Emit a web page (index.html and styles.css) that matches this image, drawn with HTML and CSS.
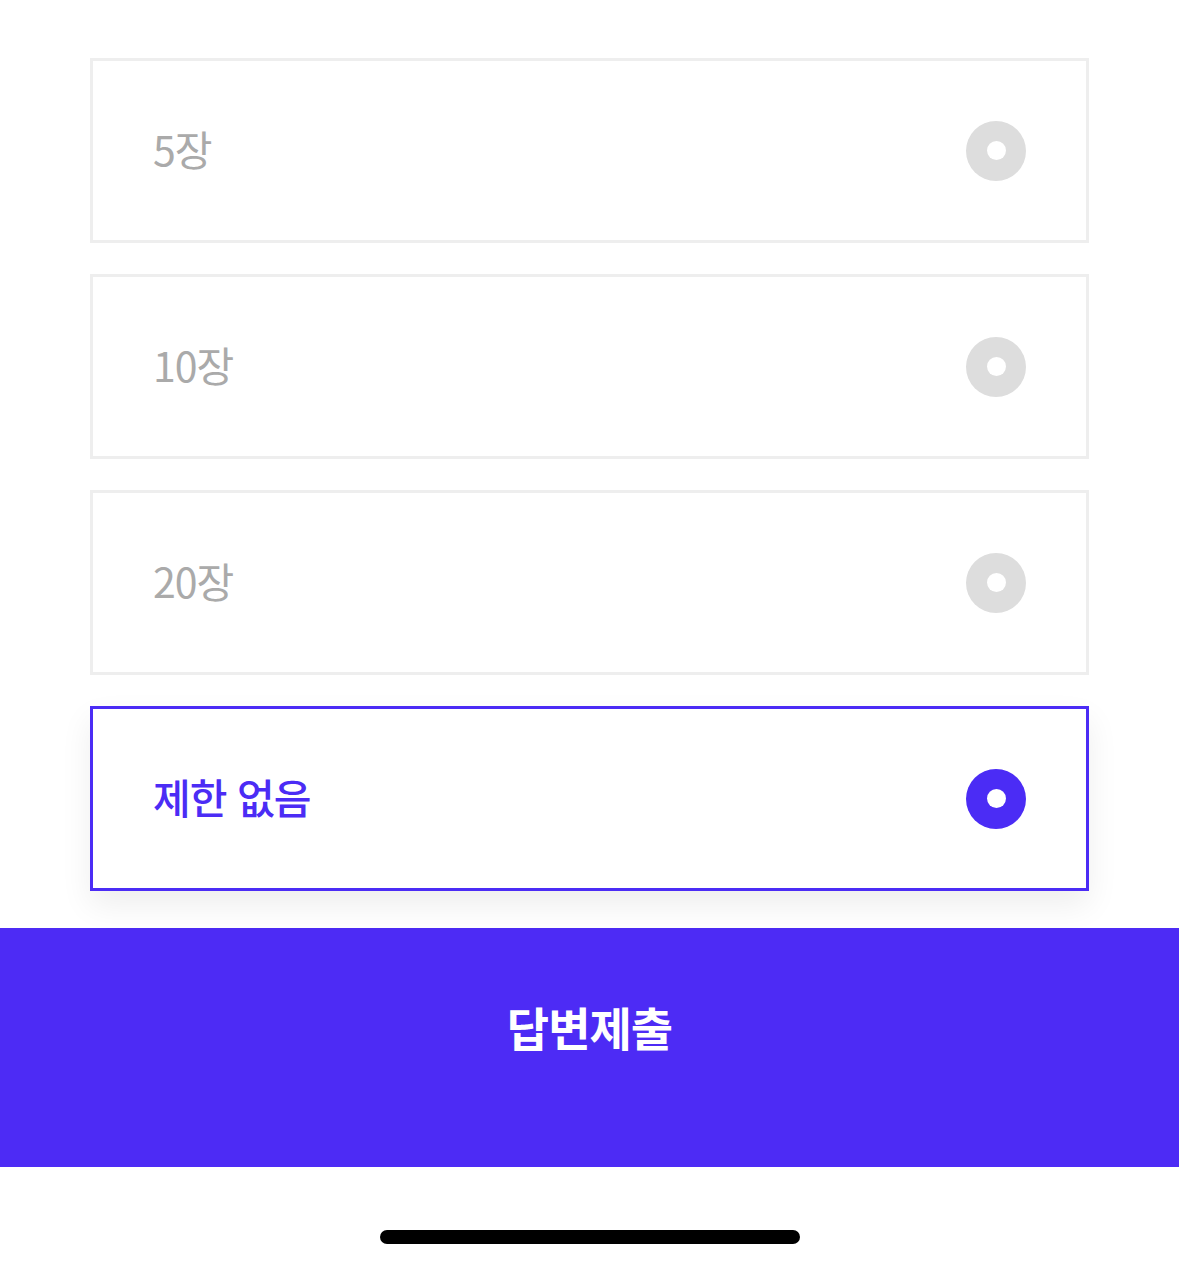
FILE: index.html
```html
<!DOCTYPE html>
<html lang="ko">
<head>
  <meta charset="UTF-8" />
  <title>답변제출</title>
  <link rel="stylesheet" href="styles.css">
</head>
<body>
  <div class="options">
    <label class="option">
      <span class="option-text">5장</span>
      <span class="radio"></span>
    </label>
    <label class="option">
      <span class="option-text">10장</span>
      <span class="radio"></span>
    </label>
    <label class="option">
      <span class="option-text">20장</span>
      <span class="radio"></span>
    </label>
    <label class="option selected">
      <span class="option-text">제한 없음</span>
      <span class="radio"></span>
    </label>
  </div>

  <button class="submit">답변제출</button>

  <div class="home-bar">
    <span class="home-indicator"></span>
  </div>
</body>
</html>
```

FILE: styles.css
```css
body {
  margin: 0;
  font-family: "Noto Sans CJK KR", "Noto Sans", sans-serif;
  background: #fff;
}

.options {
  display: flex;
  flex-direction: column;
  gap: 31px;
  padding: 58px 90px 0 90px;
}

.option {
  display: flex;
  align-items: center;
  justify-content: space-between;
  height: 179px;
  padding: 0 60px;
  border: 3px solid #eeeeee;
  background: #fff;
}

.option-text {
  margin-bottom: 6px;
  font-size: 41px;
  color: #aaaaaa;
  letter-spacing: -1px;
}

.radio {
  width: 60px;
  height: 60px;
  border-radius: 50%;
  background: #dddddd;
  display: flex;
  align-items: center;
  justify-content: center;
}

.radio::after {
  content: "";
  width: 19px;
  height: 19px;
  border-radius: 50%;
  background: #fff;
}

.option.selected {
  border-color: #4b2cf5;
  box-shadow: 0 14px 30px rgba(0, 0, 0, 0.07);
}

.option.selected .option-text {
  color: #4b2cf5;
  font-weight: 500;
}

.option.selected .radio {
  background: #4b2cf5;
}

.submit {
  display: block;
  width: 100%;
  height: 239px;
  margin-top: 37px;
  padding: 0 0 44px 0;
  border: none;
  background: #4d2bf5;
  color: #fff;
  font-family: inherit;
  font-size: 46px;
  font-weight: 700;
  letter-spacing: -1px;
}

.home-bar {
  display: flex;
  justify-content: center;
  padding-top: 63px;
}

.home-indicator {
  width: 420px;
  height: 14px;
  border-radius: 7px;
  background: #000;
}
```
